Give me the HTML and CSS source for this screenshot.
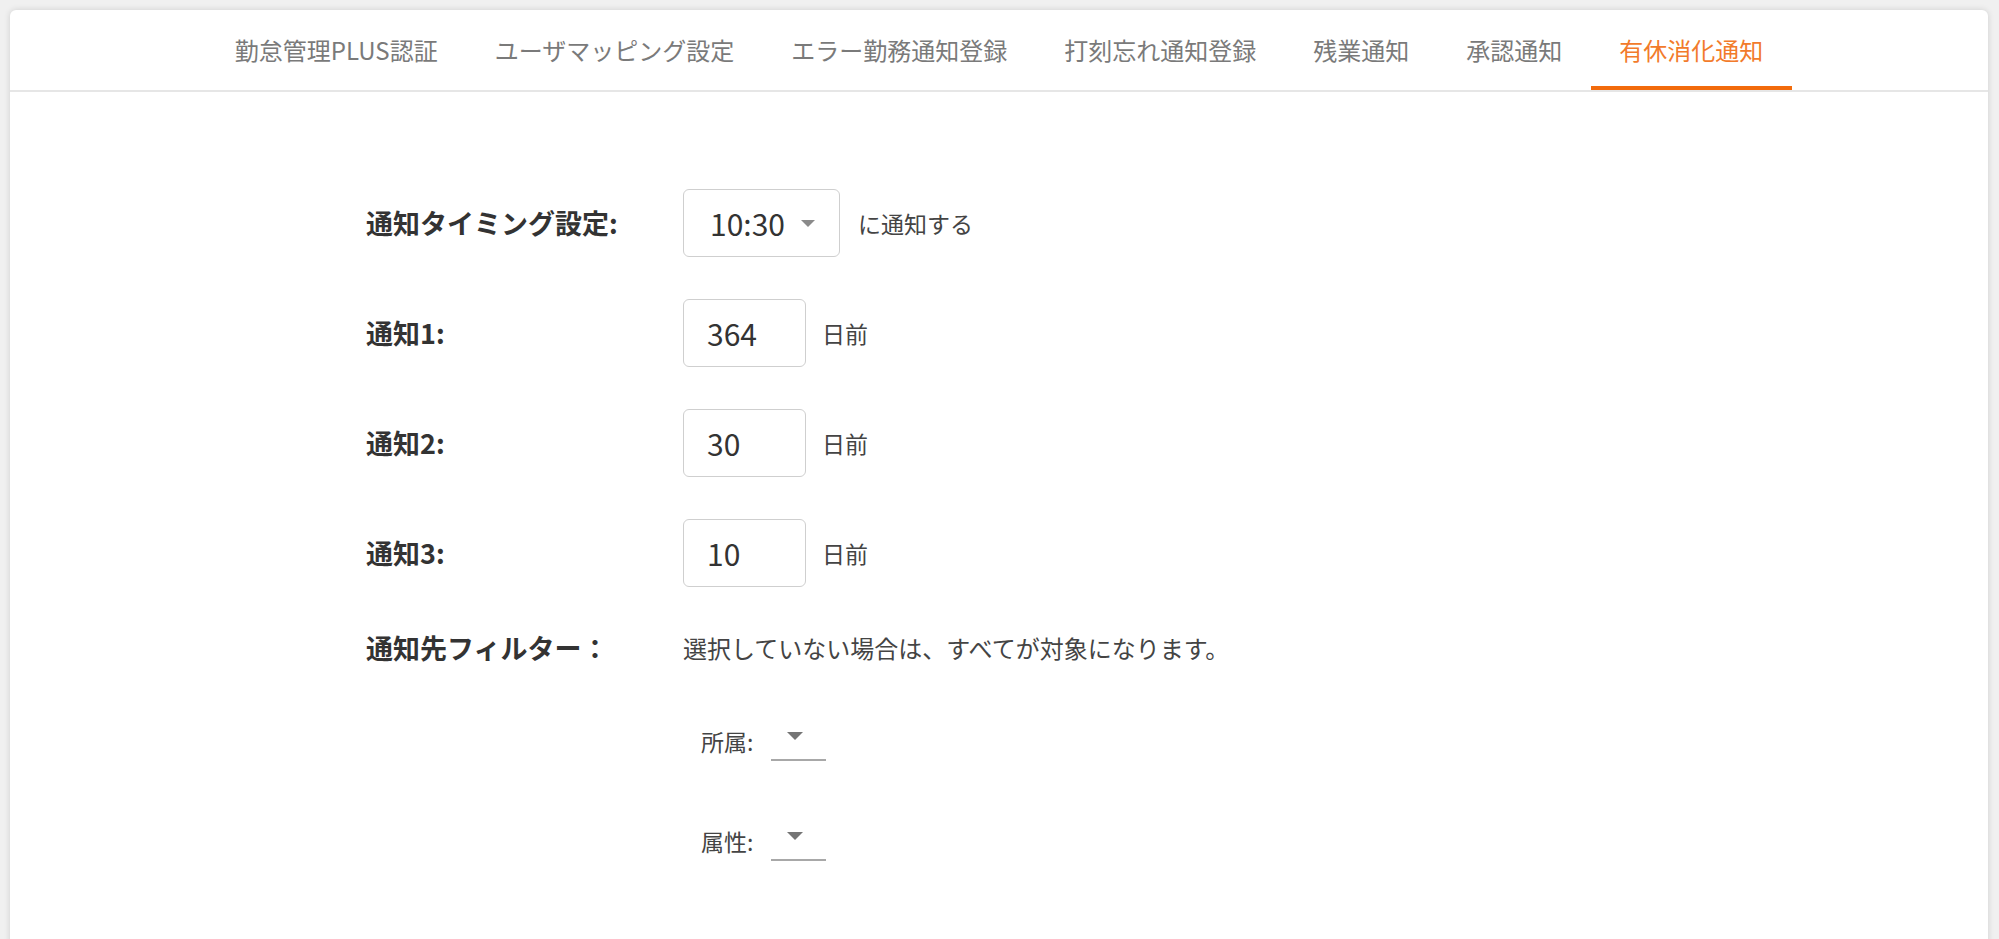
FILE: index.html
```html
<!DOCTYPE html>
<html lang="ja">
<head>
    <meta charset="UTF-8">
    <meta name="viewport" content="width=device-width, initial-scale=1.0">
    <title>有休消化通知</title>
    <link rel="stylesheet" href="styles.css">
</head>
<body>
    <div class="card">
        <!-- Tabs -->
        <nav class="tabs">
            <a href="#" class="tab">勤怠管理PLUS認証</a>
            <a href="#" class="tab">ユーザマッピング設定</a>
            <a href="#" class="tab">エラー勤務通知登録</a>
            <a href="#" class="tab">打刻忘れ通知登録</a>
            <a href="#" class="tab">残業通知</a>
            <a href="#" class="tab">承認通知</a>
            <a href="#" class="tab active">有休消化通知</a>
        </nav>

        <!-- Settings form -->
        <form class="settings">
            <div class="row">
                <label class="row-label">通知タイミング設定:</label>
                <div class="time-select">
                    <span>10:30</span>
                    <span class="caret"></span>
                </div>
                <span class="suffix">に通知する</span>
            </div>

            <div class="row">
                <label class="row-label">通知1:</label>
                <input type="text" class="days" value="364">
                <span class="suffix days-suffix">日前</span>
            </div>

            <div class="row">
                <label class="row-label">通知2:</label>
                <input type="text" class="days" value="30">
                <span class="suffix days-suffix">日前</span>
            </div>

            <div class="row">
                <label class="row-label">通知3:</label>
                <input type="text" class="days" value="10">
                <span class="suffix days-suffix">日前</span>
            </div>

            <div class="row filter">
                <label class="row-label">通知先フィルター：</label>
                <div class="filter-body">
                    <p class="note">選択していない場合は、すべてが対象になります。</p>
                    <div class="filter-item">
                        <span class="filter-label">所属:</span>
                        <div class="dropdown"><span class="caret small"></span></div>
                    </div>
                    <div class="filter-item">
                        <span class="filter-label">属性:</span>
                        <div class="dropdown"><span class="caret small"></span></div>
                    </div>
                </div>
            </div>
        </form>
    </div>
</body>
</html>
```

FILE: styles.css
```css
* {
    box-sizing: border-box;
}

body {
    margin: 0;
    padding: 10px 11px 0 10px;
    background-color: #f0f0f0;
    font-family: "Noto Sans CJK JP", "Noto Sans", sans-serif;
    color: #333;
}

.card {
    background-color: #fff;
    border-radius: 6px 6px 0 0;
    box-shadow: 0 0 6px rgba(0, 0, 0, 0.14);
    min-height: 1000px;
}

/* tabs */
.tabs {
    display: flex;
    justify-content: center;
    height: 82px;
    border-bottom: 2px solid #e6e6e6;
}

.tab {
    display: flex;
    align-items: center;
    padding: 4px 28.5px 0;
    font-size: 24px;
    line-height: 1;
    color: #7a7a7a;
    text-decoration: none;
    border-bottom: 4px solid transparent;
}

.tab.active {
    color: #f27b2b;
    border-bottom-color: #f26b0c;
}

/* form */
.settings {
    width: 1266px;
    margin: 0 auto;
    padding-top: 97px;
    display: flex;
    flex-direction: column;
    gap: 42px;
}

.row {
    display: flex;
    align-items: center;
}

.row-label {
    width: 317px;
    flex-shrink: 0;
    font-size: 27px;
    font-weight: bold;
    line-height: 38px;
    color: #333;
}

.time-select {
    display: flex;
    align-items: center;
    justify-content: space-between;
    width: 157px;
    height: 68px;
    padding: 0 24px 0 26px;
    border: 1px solid #cfcfcf;
    border-radius: 6px;
    font-size: 30px;
    color: #333;
}

.caret {
    width: 0;
    height: 0;
    border-left: 7px solid transparent;
    border-right: 7px solid transparent;
    border-top: 7px solid #8a8a8a;
}

.caret.small {
    border-left-width: 8px;
    border-right-width: 8px;
    border-top: 8px solid #757575;
}

.days {
    width: 123px;
    height: 68px;
    padding: 0 0 0 23px;
    border: 1px solid #cfcfcf;
    border-radius: 6px;
    font-family: inherit;
    font-size: 30px;
    color: #333;
    outline: none;
}

.suffix {
    margin-left: 18px;
    font-size: 23px;
    color: #444;
}

.days-suffix {
    margin-left: 16px;
}

/* filter */
.row.filter {
    align-items: flex-start;
}

.filter-body {
    display: flex;
    flex-direction: column;
    gap: 60px;
}

.note {
    margin: 0 0 -6px;
    font-size: 24px;
    line-height: 38px;
    color: #444;
}

.filter-item {
    display: flex;
    align-items: center;
    height: 40px;
    padding-left: 18px;
}

.filter-label {
    font-size: 23px;
    color: #444;
    margin-right: 18px;
}

.dropdown {
    width: 55px;
    height: 40px;
    padding: 11px 0 0 16px;
    border-bottom: 2px solid #a8a8a8;
}

.dropdown .caret {
    display: block;
}
```
